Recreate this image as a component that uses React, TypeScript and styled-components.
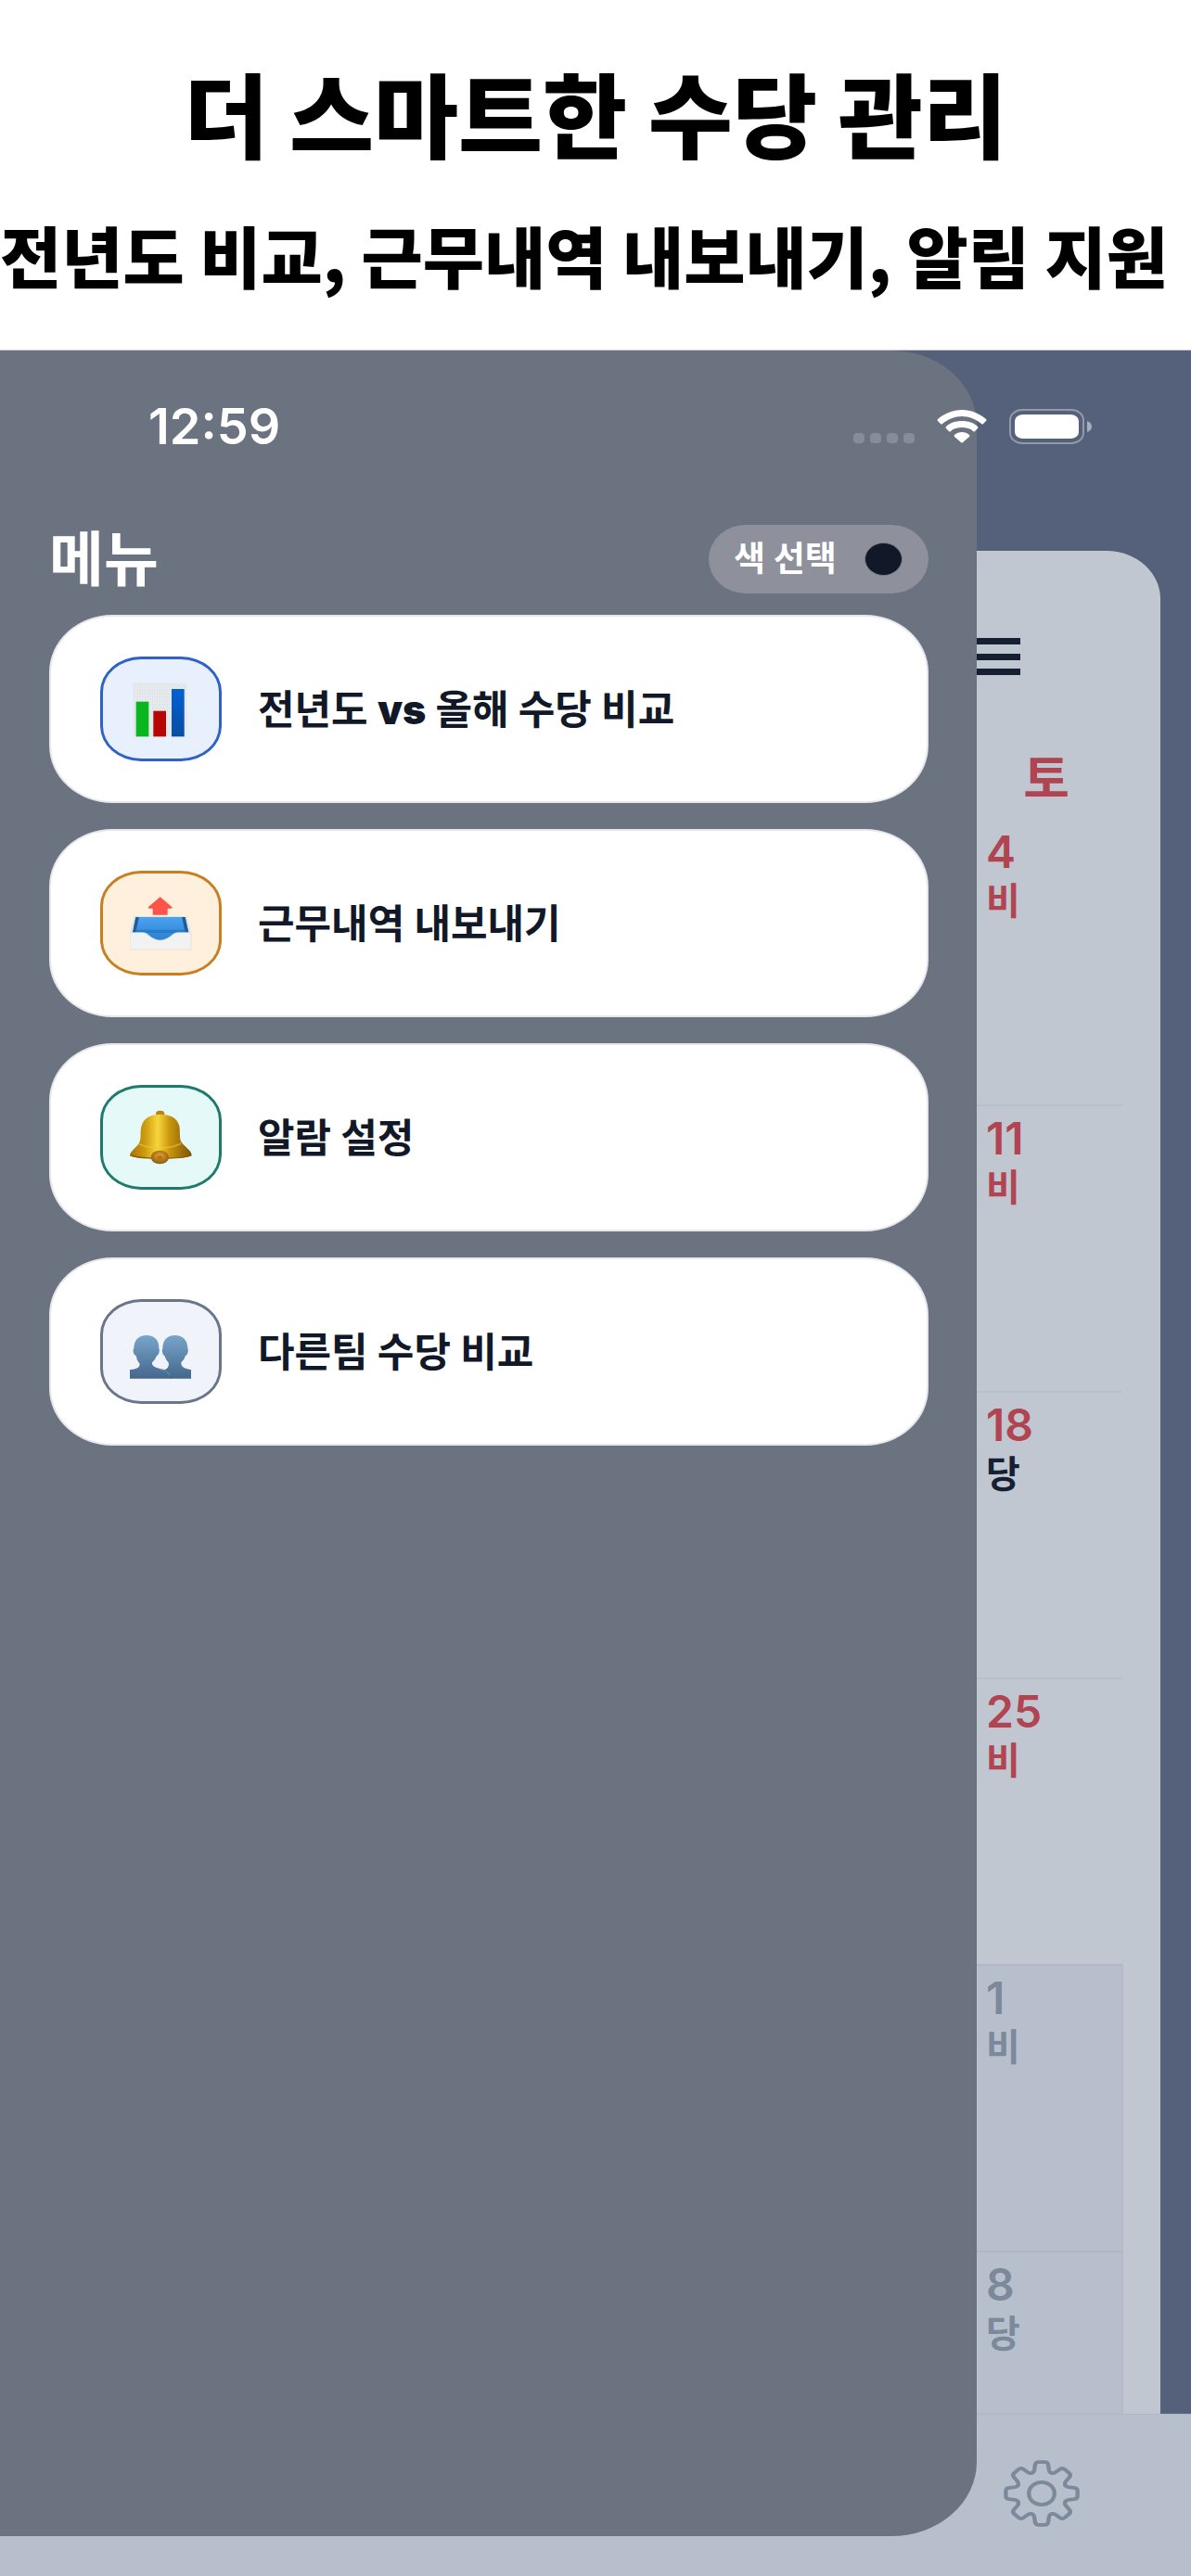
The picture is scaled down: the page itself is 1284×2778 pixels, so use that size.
import React, { useState } from 'react';
import styled, { createGlobalStyle } from 'styled-components';

const GlobalStyle = createGlobalStyle`
  * {
    box-sizing: border-box;
  }

  body {
    margin: 0;
    background: #ffffff;
    font-family: Inter, 'Noto Sans CJK KR', sans-serif;
  }

  button {
    font-family: inherit;
    border: none;
    cursor: pointer;
  }
`

const Page = styled.div`
  display: flex;
  flex-direction: column;
  min-height: 100vh;
  overflow: hidden;
`

const Promo = styled.header`
  display: flex;
  flex-direction: column;
  height: 378px;
  padding-top: 48px;
  border-bottom: 1px solid #c9cdd4;
  color: #000000;
  font-family: 'Noto Sans CJK KR', sans-serif;
  font-weight: 900;
  white-space: nowrap;
`

const PromoTitle = styled.h1`
  margin: 0;
  font-size: 99px;
  line-height: 144px;
  font-weight: 900;
  text-align: center;
`

const PromoText = styled.p`
  margin: 28px 0 0;
  font-size: 72px;
  line-height: 108px;
`

const Screen = styled.div`
  position: relative;
  display: flex;
  flex-direction: column;
  flex: 1;
  background: #55617a;
`

const StatusBar = styled.div`
  position: relative;
  z-index: 2;
  display: flex;
  justify-content: space-between;
  height: 216px;
  padding: 52px 107px 0 160px;
`

const Time = styled.span`
  color: #ffffff;
  font-size: 54px;
  line-height: 60px;
  font-weight: 600;
`

const StatusIcons = styled.div`
  display: flex;
  align-items: center;
  gap: 24px;
  height: 60px;
`

const Signal = styled.div`
  display: flex;
  gap: 6px;
  padding-top: 24px;
`

const SignalDot = styled.i`
  width: 12px;
  height: 11px;
  border-radius: 4px;
  background: #868c98;
`

const Sheet = styled.main`
  display: flex;
  flex-direction: column;
  align-items: flex-end;
  flex: 1;
  margin-right: 33px;
  padding: 92px 40px 0 0;
  border-top-right-radius: 58px 52px;
  background: #c0c7d1;
`

const BurgerBtn = styled.button`
  display: flex;
  flex-direction: column;
  justify-content: space-between;
  width: 60px;
  height: 44px;
  margin-right: 111px;
  padding: 2px 0;
  background: none;
`

const BurgerLine = styled.span`
  height: 7px;
  background: #152033;
`

const Column = styled.section`
  display: flex;
  flex-direction: column;
  flex: 1;
  width: 166px;
`

const WeekDay = styled.h2`
  margin: 0;
  padding-top: 75px;
  height: 152px;
  color: #b04450;
  font-size: 54px;
  line-height: 72px;
  font-weight: 700;
  text-align: center;
`

const Day = styled.div<{ $muted?: boolean; $last?: boolean }>`
  flex: ${p => p.$last ? '1 0 176px' : '0 0 309px'};
  padding: 8px 0 0 18px;
  border-top: 2px solid ${p => p.$muted ? '#b0b8c5' : '#b8bfcb'};
  border-right: 2px solid ${p => p.$muted ? '#b3bbc8' : 'transparent'};
  background: ${p => p.$muted ? '#b7bfcc' : 'transparent'};

  &:first-of-type {
    border-top-color: transparent;
  }
`

const DayNumber = styled.p<{ $color: string }>`
  margin: 0;
  color: ${p => p.$color};
  font-size: 48px;
  line-height: 54px;
  font-weight: 600;
`

const DayShift = styled.p<{ $color: string }>`
  margin: 0;
  color: ${p => p.$color};
  font-size: 40px;
  line-height: 52px;
  font-weight: 700;
`

const TabBar = styled.nav`
  display: flex;
  justify-content: flex-end;
  height: 175px;
  padding: 49px 120px 0 0;
  border-top: 1px solid #aeb7c4;
  background: #b7bfcc;
`

const TabBtn = styled.button`
  display: block;
  width: 82px;
  height: 72px;
  padding: 0;
  background: none;
`

const Drawer = styled.aside`
  position: absolute;
  z-index: 1;
  top: 0;
  bottom: 43px;
  left: 0;
  width: 82%;
  padding: 188px 52px 0 53px;
  border-radius: 0 92px 92px 0 / 0 80px 80px 0;
  background: #6b7280;
`

const DrawerHead = styled.div`
  display: flex;
  align-items: center;
  justify-content: space-between;
  height: 74px;
  margin-bottom: 23px;
`

const DrawerTitle = styled.h2`
  margin: 0;
  color: #ffffff;
  font-size: 64px;
  line-height: 74px;
  font-weight: 700;
`

const ColorBtn = styled.button`
  display: flex;
  align-items: center;
  justify-content: space-between;
  width: 237px;
  height: 74px;
  padding: 0 28px 0 27px;
  border-radius: 40px / 37px;
  background: #8e919c;
  color: #ffffff;
  font-size: 37px;
  line-height: 52px;
  font-weight: 700;
`

const ColorDot = styled.span`
  width: 41px;
  height: 36px;
  border: 1px solid #7d818d;
  border-radius: 50%;
  background: #111827;
`

const MenuList = styled.div`
  display: flex;
  flex-direction: column;
  gap: 28px;
`

const MenuBtn = styled.button`
  display: flex;
  align-items: center;
  gap: 39px;
  width: 100%;
  height: 203px;
  padding: 0 53px;
  border: 2px solid #e5e7eb;
  border-radius: 68px / 62px;
  background: #ffffff;
  color: #111827;
  font-size: 43px;
  line-height: 60px;
  font-weight: 700;
  text-align: left;

  b {
    font-weight: 900;
  }
`

const IconBox = styled.span<{ $line: string; $fill: string }>`
  display: flex;
  align-items: center;
  justify-content: center;
  width: 131px;
  height: 113px;
  border: 3px solid ${p => p.$line};
  border-radius: 44px / 38px;
  background: ${p => p.$fill};
`

function ChartIcon() {
  return (
    <svg width="68" height="60" viewBox="0 0 204 180">
      <defs>
        <pattern id="paper" width="8" height="8" patternUnits="userSpaceOnUse">
          <rect width="8" height="8" fill="#e9edf0" />
          <path d="M0 0H8M0 0V8" stroke="#d2d8dc" strokeWidth="2" />
        </pattern>
        <linearGradient id="blueBar" x1="0" y1="0" x2="0" y2="1">
          <stop offset="0" stopColor="#0560d2" />
          <stop offset="1" stopColor="#064ea2" />
        </linearGradient>
      </defs>
      <rect x="10" y="4" width="174" height="174" fill="url(#paper)" />
      <rect x="20" y="65" width="41" height="113" fill="#08b71d" />
      <rect x="76" y="95" width="41" height="83" fill="#b90406" />
      <rect x="135" y="24" width="41" height="154" fill="url(#blueBar)" />
    </svg>
  )
}

function OutboxIcon() {
  return (
    <svg width="68" height="60" viewBox="0 0 204 180">
      <defs>
        <linearGradient id="tray" x1="0" y1="0" x2="0" y2="1">
          <stop offset="0" stopColor="#4ba3f0" />
          <stop offset="1" stopColor="#2a7fd0" />
        </linearGradient>
      </defs>
      <path d="M98 4L136 36Q139 41 133 41H122V62H74V41H63Q57 41 60 36Z" fill="#fb5549" />
      <path d="M14 66H184L198 120V170Q198 174 194 174H4Q0 174 0 170V120Z" fill="#dce3e8" />
      <path d="M19 69H179L190 120Q150 122 98 147Q46 122 9 120Z" fill="url(#tray)" />
      <path d="M19 69L9 120H18L30 69ZM179 69L190 120H180L168 69Z" fill="#215b93" />
      <path d="M19 110H180L182 120H17Z" fill="#1d70c0" opacity="0.6" />
      <path d="M0 119H42C62 119 66 144 98 144C130 144 134 119 156 119H198V170Q198 174 194 174H4Q0 174 0 170Z" fill="#f1f2f2" stroke="#dedbd5" strokeWidth="2" />
    </svg>
  )
}

function BellIcon() {
  return (
    <svg width="68" height="60" viewBox="0 0 204 180">
      <defs>
        <linearGradient id="gold" x1="0" y1="0" x2="1" y2="0">
          <stop offset="0" stopColor="#a87408" />
          <stop offset="0.25" stopColor="#cf9c10" />
          <stop offset="0.45" stopColor="#f6d63c" />
          <stop offset="0.65" stopColor="#c8940e" />
          <stop offset="1" stopColor="#7c5206" />
        </linearGradient>
        <radialGradient id="clapper" cx="0.5" cy="0.4" r="0.6">
          <stop offset="0" stopColor="#e6a733" />
          <stop offset="1" stopColor="#8b5a0a" />
        </radialGradient>
      </defs>
      <ellipse cx="98" cy="12" rx="14" ry="10" fill="#b58313" />
      <path d="M98 14C130 14 154 26 160 52C164 72 158 92 168 106C178 120 198 130 200 145C196 156 150 156 98 156C46 156 2 156 0 145C4 130 24 120 31 104C38 90 32 70 38 50C46 26 66 14 98 14Z" fill="url(#gold)" />
      <path d="M30 110C70 128 130 128 166 108" fill="none" stroke="#f2ca35" strokeWidth="5" opacity="0.6" />
      <path d="M2 147C30 156 50 155 70 156M124 156C160 156 180 155 199 147" fill="none" stroke="#8a5d07" strokeWidth="4" />
      <ellipse cx="97" cy="153" rx="29" ry="22" fill="url(#clapper)" />
      <circle cx="97" cy="156" r="9" fill="#b4761a" />
    </svg>
  )
}

function PeopleIcon() {
  return (
    <svg width="68" height="60" viewBox="0 0 204 180">
      <defs>
        <linearGradient id="people" x1="0" y1="36" x2="0" y2="176" gradientUnits="userSpaceOnUse">
          <stop offset="0" stopColor="#79a5cb" />
          <stop offset="1" stopColor="#44678b" />
        </linearGradient>
      </defs>
      <g fill="url(#people)">
        <path d="M54 36C80 36 95 52 94 78Q98 84 94 94Q92 100 87 102Q82 116 72 124C68 140 100 146 120 148L134 176H0V147C14 146 32 144 32 128Q22 118 20 102Q13 100 11 90Q9 82 13 78C13 52 28 36 54 36Z" />
        <path d="M146 36C172 36 187 52 187 78Q191 84 187 94Q185 100 180 102Q176 116 166 124C164 140 182 146 198 147V176H130Q128 162 112 148C120 144 126 140 126 126Q116 116 112 102Q106 100 105 90Q103 82 106 78C106 52 120 36 146 36Z" />
      </g>
      <path d="M96 146Q120 148 130 166" fill="none" stroke="#7fa3c4" strokeWidth="2" />
    </svg>
  )
}

function WifiIcon() {
  return (
    <svg width="54" height="36" viewBox="0 0 54 36" fill="#ffffff">
      <path d="M27 0C37 0 46 4 53 10Q54 11 53 12L50 15Q49 16 48 15C42 10 35 7 27 7S12 10 6 15Q5 16 4 15L1 12Q0 11 1 10C8 4 17 0 27 0Z" />
      <path d="M27 12C34 12 40 14 44 18Q45 19 44 20L41 23Q40 24 39 23C36 20 32 19 27 19S18 20 15 23Q14 24 13 23L10 20Q9 19 10 18C14 14 20 12 27 12Z" />
      <path d="M27 24C30 24 33 25 35 27Q36 28 35 29L28 35Q27 36 26 35L19 29Q18 28 19 27C21 25 24 24 27 24Z" />
    </svg>
  )
}

function BatteryIcon() {
  return (
    <svg width="89" height="38" viewBox="0 0 89 38">
      <rect x="1" y="1" width="79" height="36" rx="13" ry="11" fill="none" stroke="#9299a8" strokeWidth="2" />
      <rect x="6" y="6" width="69" height="26" rx="9" ry="7" fill="#ffffff" />
      <path d="M84 13Q89 15 89 19T84 25Z" fill="#a9afbb" />
    </svg>
  )
}

const teeth = [0, 45, 90, 135, 180, 225, 270, 315]

function GearIcon() {
  return (
    <svg width="82" height="72" viewBox="-104 -104 208 208" preserveAspectRatio="none" fill="none" stroke="#7c899b" strokeWidth="11" strokeLinecap="round">
      {teeth.map(angle => (
        <path
          key={angle}
          transform={`rotate(${angle})`}
          d="M-27 -64L-25 -65Q-21 -67 -20 -73L-18 -89Q-17 -98 -8 -98H8Q17 -98 18 -89L20 -73Q21 -67 25 -65L27 -64"
        />
      ))}
      <circle r="35" />
    </svg>
  )
}

const menu = [
  { title: <span>전년도 <b>vs</b> 올해 수당 비교</span>, line: '#2f62c8', fill: '#e8f0fe', icon: <ChartIcon /> },
  { title: '근무내역 내보내기', line: '#c77f22', fill: '#fff0dd', icon: <OutboxIcon /> },
  { title: '알람 설정', line: '#1d7a6c', fill: '#e5faf8', icon: <BellIcon /> },
  { title: '다른팀 수당 비교', line: '#68758a', fill: '#f0f4fa', icon: <PeopleIcon /> },
]

const red = '#b04450'
const dark = '#152033'
const gray = '#7c899b'

const days = [
  { num: 4, shift: '비', color: red, shiftColor: red },
  { num: 11, shift: '비', color: red, shiftColor: red },
  { num: 18, shift: '당', color: red, shiftColor: dark },
  { num: 25, shift: '비', color: red, shiftColor: red },
  { num: 1, shift: '비', color: gray, shiftColor: gray, muted: true },
  { num: 8, shift: '당', color: gray, shiftColor: gray, muted: true },
]

function App() {
  const [open, setOpen] = useState(true)

  return (
    <>
      <GlobalStyle />
      <Page>
        <Promo>
          <PromoTitle>더 스마트한 수당 관리</PromoTitle>
          <PromoText>전년도 비교, 근무내역 내보내기, 알림 지원</PromoText>
        </Promo>
        <Screen>
          <StatusBar>
            <Time>12:59</Time>
            <StatusIcons>
              <Signal>
                <SignalDot />
                <SignalDot />
                <SignalDot />
                <SignalDot />
              </Signal>
              <WifiIcon />
              <BatteryIcon />
            </StatusIcons>
          </StatusBar>

          <Sheet>
            <BurgerBtn aria-label="메뉴 열기" onClick={() => setOpen(!open)}>
              <BurgerLine />
              <BurgerLine />
              <BurgerLine />
            </BurgerBtn>
            <Column>
              <WeekDay>토</WeekDay>
              {days.map((day, i) => (
                <Day key={day.num} $muted={day.muted} $last={i === days.length - 1}>
                  <DayNumber $color={day.color}>{day.num}</DayNumber>
                  <DayShift $color={day.shiftColor}>{day.shift}</DayShift>
                </Day>
              ))}
            </Column>
          </Sheet>

          <TabBar>
            <TabBtn aria-label="설정"><GearIcon /></TabBtn>
          </TabBar>

          {open && (
            <Drawer>
              <DrawerHead>
                <DrawerTitle>메뉴</DrawerTitle>
                <ColorBtn>
                  색 선택
                  <ColorDot />
                </ColorBtn>
              </DrawerHead>
              <MenuList>
                {menu.map((item, i) => (
                  <MenuBtn key={i}>
                    <IconBox $line={item.line} $fill={item.fill}>{item.icon}</IconBox>
                    {item.title}
                  </MenuBtn>
                ))}
              </MenuList>
            </Drawer>
          )}
        </Screen>
      </Page>
    </>
  );
}

export default App;
